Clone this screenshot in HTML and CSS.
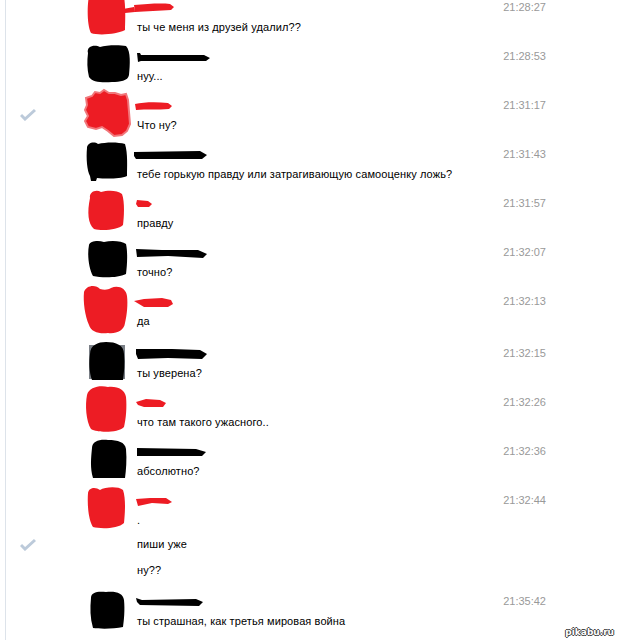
FILE: index.html
```html
<!DOCTYPE html>
<html lang="ru">
<head>
    <meta charset="UTF-8">
    <title>Диалог</title>
    <link rel="stylesheet" href="styles.css">
</head>
<body>
    <!-- История переписки -->
    <div class="dialog">

        <div class="msg">
            <div class="msg-check"></div>
            <div class="msg-ava">
                <svg viewBox="0 0 50 50" width="50" height="50"><path class="red" d="M5 0 C15 -1 34 0 40 1 C42 12 41 27 41 34 C34 38 15 40 7 37 C3 29 3 10 5 0Z"/></svg>
            </div>
            <div class="msg-body">
                <div class="msg-name">
                    <svg viewBox="0 0 95 14" width="95" height="14"><path class="red" d="M1 7 L12 5 L13 10 L3 11Z M12 3 C25 2 38 1 48 2 L52 5 L49 8 C38 9 24 9 13 10Z"/></svg>
                </div>
                <div class="msg-text">ты че меня из друзей удалил??</div>
            </div>
            <div class="msg-time">21:28:27</div>
        </div>

        <div class="msg">
            <div class="msg-check"></div>
            <div class="msg-ava">
                <svg viewBox="0 0 50 50" width="50" height="50"><path class="black" d="M4 8 C2 1 11 -1 16 2 C22 0 36 0 42 1 C47 6 46 20 45 30 C44 36 36 37 28 37 C18 38 8 37 5 32 C3 24 3 16 4 8Z"/></svg>
            </div>
            <div class="msg-body">
                <div class="msg-name">
                    <svg viewBox="0 0 95 14" width="95" height="14"><path class="black" d="M15 2 L18 2 L19 4 L82 4 L88 7 L84 10 L19 10 L16 11Z"/></svg>
                </div>
                <div class="msg-text">нуу...</div>
            </div>
            <div class="msg-time">21:28:53</div>
        </div>

        <div class="msg">
            <div class="msg-check"><svg class="check" viewBox="0 0 16 13" width="16" height="13"><path d="M1 7 L5 11 L15 2"/></svg></div>
            <div class="msg-ava">
                <svg viewBox="0 0 50 50" width="50" height="50"><path class="red fuzzy" d="M2 4 L8 2 L11 -2 L16 -1 L20 -4 L25 -1 L31 -1 L37 1 L42 0 L44 6 L45 18 L46 30 L43 37 L38 41 L30 42 L24 37 L18 33 L12 35 L4 33 L1 27 L4 22 L1 16 L3 11Z"/></svg>
            </div>
            <div class="msg-body">
                <div class="msg-name">
                    <svg viewBox="0 0 95 14" width="95" height="14"><path class="red" d="M13 4 C22 2 35 2 46 3 L50 6 L47 9 C36 10 24 9 14 10Z"/></svg>
                </div>
                <div class="msg-text">Что ну?</div>
            </div>
            <div class="msg-time">21:31:17</div>
        </div>

        <div class="msg">
            <div class="msg-check"></div>
            <div class="msg-ava">
                <svg viewBox="0 0 50 50" width="50" height="50"><path class="black" d="M3 5 C3 0 10 -2 14 1 C22 -1 34 -1 41 1 C44 10 43 25 43 33 C36 36 22 36 13 35 L12 38 L7 38 L6 33 C3 28 2 15 3 5Z"/></svg>
            </div>
            <div class="msg-body">
                <div class="msg-name">
                    <svg viewBox="0 0 95 14" width="95" height="14"><path class="black" d="M12 3 L78 2 L85 6 L80 10 L14 10 L12 7Z"/></svg>
                </div>
                <div class="msg-text">тебе горькую правду или затрагивающую самооценку ложь?</div>
            </div>
            <div class="msg-time">21:31:43</div>
        </div>

        <div class="msg">
            <div class="msg-check"></div>
            <div class="msg-ava">
                <svg viewBox="0 0 50 50" width="50" height="50"><path class="red" d="M6 6 C5 0 12 -3 17 0 C24 -2 33 -2 38 2 C41 10 40 26 39 33 C34 38 18 39 10 37 C4 32 3 20 6 6Z"/></svg>
            </div>
            <div class="msg-body">
                <div class="msg-name">
                    <svg viewBox="0 0 95 14" width="95" height="14"><path class="red" d="M15 2 L26 3 L30 6 L27 9 L16 9 L14 6Z"/></svg>
                </div>
                <div class="msg-text">правду</div>
            </div>
            <div class="msg-time">21:31:57</div>
        </div>

        <div class="msg">
            <div class="msg-check"></div>
            <div class="msg-ava">
                <svg viewBox="0 0 50 50" width="50" height="50"><path class="black" d="M5 4 C6 0 14 -1 20 1 C28 -1 38 0 42 3 C44 12 43 25 42 33 C34 37 18 37 9 35 C5 28 3 14 5 4Z"/></svg>
            </div>
            <div class="msg-body">
                <div class="msg-name">
                    <svg viewBox="0 0 95 14" width="95" height="14"><path class="black" d="M14 2 L40 3 L76 3 L85 7 L81 11 L46 9 L15 10Z"/></svg>
                </div>
                <div class="msg-text">точно?</div>
            </div>
            <div class="msg-time">21:32:07</div>
        </div>

        <div class="msg msg-tall">
            <div class="msg-check"></div>
            <div class="msg-ava">
                <svg viewBox="0 0 50 50" width="50" height="50"><path class="red" d="M0 2 C2 -5 12 -6 16 -1 C20 0 24 0 27 -2 C34 -5 42 -2 43 6 C44 14 43 25 41 33 C40 41 32 44 24 43 C15 44 7 42 5 35 C1 26 -1 12 0 2Z"/></svg>
            </div>
            <div class="msg-body">
                <div class="msg-name">
                    <svg viewBox="0 0 95 14" width="95" height="14"><path class="red" d="M12 5 L22 3 L40 2 L49 4 L51 8 L46 11 L22 11 L17 8Z"/></svg>
                </div>
                <div class="msg-text">да</div>
            </div>
            <div class="msg-time">21:32:13</div>
        </div>

        <div class="msg">
            <div class="msg-check"></div>
            <div class="msg-ava">
                <svg viewBox="0 0 50 50" width="50" height="50"><rect class="photo" x="5" y="3" width="36" height="34"/><path class="black" d="M6 12 C6 3 14 0 22 0 C32 0 40 3 40 12 C41 22 40 30 39 38 L8 38 C5 30 5 20 6 12Z"/></svg>
            </div>
            <div class="msg-body">
                <div class="msg-name">
                    <svg viewBox="0 0 95 14" width="95" height="14"><path class="black" d="M14 1 L50 1 L78 2 L85 6 L80 11 L46 10 L16 11 L14 6Z"/></svg>
                </div>
                <div class="msg-text">ты уверена?</div>
            </div>
            <div class="msg-time">21:32:15</div>
        </div>

        <div class="msg">
            <div class="msg-check"></div>
            <div class="msg-ava">
                <svg viewBox="0 0 50 50" width="50" height="50"><path class="red" d="M3 4 C5 -4 16 -6 24 -4 C34 -5 41 -1 42 6 C43 16 42 28 40 36 C34 42 14 42 7 38 C2 30 1 14 3 4Z"/></svg>
            </div>
            <div class="msg-body">
                <div class="msg-name">
                    <svg viewBox="0 0 95 14" width="95" height="14"><path class="red" d="M14 5 L24 2 L38 3 L44 6 L41 10 L22 10 L16 8Z"/></svg>
                </div>
                <div class="msg-text">что там такого ужасного..</div>
            </div>
            <div class="msg-time">21:32:26</div>
        </div>

        <div class="msg">
            <div class="msg-check"></div>
            <div class="msg-ava">
                <svg viewBox="0 0 50 50" width="50" height="50"><path class="black" d="M8 8 C8 1 16 -1 24 0 C34 0 41 2 42 9 C43 20 42 30 41 38 L9 38 C6 28 7 18 8 8Z"/></svg>
            </div>
            <div class="msg-body">
                <div class="msg-name">
                    <svg viewBox="0 0 95 14" width="95" height="14"><path class="black" d="M15 2 L74 3 L84 6 L80 10 L15 10Z"/></svg>
                </div>
                <div class="msg-text">абсолютно?</div>
            </div>
            <div class="msg-time">21:32:36</div>
        </div>

        <div class="msg msg-first">
            <div class="msg-check"></div>
            <div class="msg-ava">
                <svg viewBox="0 0 50 50" width="50" height="50"><path class="red" d="M4 4 C5 -2 12 -2 16 1 C21 -2 34 -3 39 1 C42 10 41 24 40 34 C34 40 16 40 9 38 C5 32 3 18 4 4Z"/></svg>
            </div>
            <div class="msg-body">
                <div class="msg-name">
                    <svg viewBox="0 0 95 14" width="95" height="14"><path class="red" d="M14 4 L28 3 L44 3 L50 7 L46 9 L30 8 L16 11Z"/></svg>
                </div>
                <div class="msg-text">.</div>
            </div>
            <div class="msg-time">21:32:44</div>
        </div>

        <div class="msg msg-cont">
            <div class="msg-check"><svg class="check check-line" viewBox="0 0 16 13" width="16" height="13"><path d="M1 7 L5 11 L15 2"/></svg></div>
            <div class="msg-ava"></div>
            <div class="msg-body">
                <div class="msg-text">пиши уже</div>
            </div>
            <div class="msg-time"></div>
        </div>

        <div class="msg msg-cont msg-last">
            <div class="msg-check"></div>
            <div class="msg-ava"></div>
            <div class="msg-body">
                <div class="msg-text">ну??</div>
            </div>
            <div class="msg-time"></div>
        </div>

        <div class="msg">
            <div class="msg-check"></div>
            <div class="msg-ava">
                <svg viewBox="0 0 50 50" width="50" height="50"><path class="black" d="M7 8 C7 2 14 1 22 2 C32 1 39 3 40 10 C41 20 40 30 39 37 C30 39 16 39 9 38 C6 28 6 18 7 8Z"/></svg>
            </div>
            <div class="msg-body">
                <div class="msg-name">
                    <svg viewBox="0 0 95 14" width="95" height="14"><path class="black" d="M14 2 L20 4 L74 3 L81 6 L77 10 L18 9 L15 6Z"/></svg>
                </div>
                <div class="msg-text">ты страшная, как третья мировая война</div>
            </div>
            <div class="msg-time">21:35:42</div>
        </div>

    </div>

    <div class="watermark">pikabu.ru</div>
</body>
</html>
```

FILE: styles.css
```css
/* Основные стили */
body {
    margin: 0;
    padding: 0;
    height: 640px;
    overflow: hidden;
    background-color: #fff;
    font-family: "Liberation Sans", Arial, sans-serif;
    font-size: 11px;
    color: #000;
}

/* Лента сообщений */
.dialog {
    margin-left: 5px;
    margin-top: -4px;
    min-height: 660px;
    border-left: 1px solid #dde3ea;
}

.msg {
    display: flex;
    padding: 4px 73px 11px 0;
    height: 34px;
}

.msg-tall {
    padding-bottom: 14px;
}

.msg-first {
    padding-bottom: 0;
}

.msg-cont {
    height: 14px;
    padding: 10px 73px 2px 0;
}

.msg-last {
    padding-bottom: 13px;
}

.msg-check {
    width: 78px;
    flex-shrink: 0;
}

.check {
    display: block;
    margin: 10px 0 0 14px;
}

.check-line {
    margin-top: 1px;
}

.check path {
    fill: none;
    stroke: #bccada;
    stroke-width: 3;
}

.msg-ava {
    width: 53px;
    flex-shrink: 0;
}

.msg-ava svg {
    display: block;
    margin-top: -4px;
    overflow: visible;
}

.msg-body {
    flex: 1;
}

.msg-name {
    height: 18px;
}

.msg-name svg {
    display: block;
    margin-left: -15px;
    margin-top: 2px;
    overflow: visible;
}

.msg-text {
    line-height: 14px;
    letter-spacing: 0.1px;
    white-space: nowrap;
}

.msg-time {
    color: #999;
    line-height: 14px;
    text-align: right;
}

/* Замазанные аватарки и имена */
.red {
    fill: #ed1c24;
}

.fuzzy {
    stroke: #f1777b;
    stroke-width: 2;
}

.black {
    fill: #000;
}

.photo {
    fill: #7a7f86;
}

/* Водяной знак */
.watermark {
    position: absolute;
    right: 5px;
    bottom: 3px;
    font-family: "DejaVu Sans", sans-serif;
    font-size: 9px;
    font-weight: bold;
    color: #fff;
    text-shadow: 1px 0 0 #444, -1px 0 0 #444, 0 1px 0 #444, 0 -1px 0 #444;
}
```
